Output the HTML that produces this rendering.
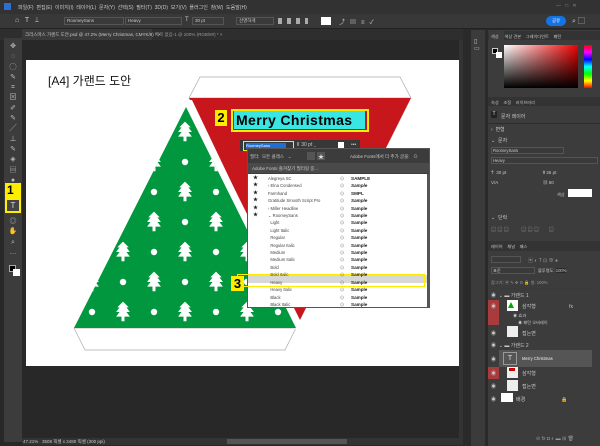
<!DOCTYPE html>
<html><head><meta charset="utf-8"><style>
*{margin:0;padding:0;box-sizing:border-box}
body{width:600px;height:446px;overflow:hidden;background:#282828;font-family:"Liberation Sans","Noto Sans CJK KR",sans-serif;position:relative;color:#ccc}
.a{position:absolute}
.t{position:absolute;font-size:5px;color:#c8c8c8;white-space:nowrap}
.f{position:absolute;background:#3a3a3a;border:1px solid #555;height:8px}
.ly{position:absolute;left:499px;width:93px;height:13px;border-top:1px solid #3a3a3a;background:#535353}
</style></head><body>
<!-- menu bar -->
<div class="a" style="left:0;top:0;width:600px;height:14px;background:#323232"></div>
<div class="a" style="left:4px;top:3px;width:7px;height:7px;background:#2d6fd0"></div>
<div class="t" style="left:18px;top:4px;font-size:5px">파일(F) &nbsp;편집(E) &nbsp;이미지(I) &nbsp;레이어(L) &nbsp;문자(Y) &nbsp;선택(S) &nbsp;필터(T) &nbsp;3D(D) &nbsp;보기(V) &nbsp;플러그인 &nbsp;창(W) &nbsp;도움말(H)</div>
<div class="t" style="left:556px;top:3px;color:#888">—&nbsp;&nbsp;&nbsp;□&nbsp;&nbsp;&nbsp;✕</div>
<!-- options bar -->
<div class="a" style="left:0;top:14px;width:600px;height:15px;background:#383838;border-bottom:1px solid #222"></div>
<div class="t" style="left:15px;top:17px;font-size:7px">⌂ &nbsp; T &nbsp; ⟘</div>
<div class="f" style="left:64px;top:17px;width:60px"></div><div class="t" style="left:67px;top:18px;font-size:4.5px">RoomeySans</div>
<div class="f" style="left:125px;top:17px;width:57px"></div><div class="t" style="left:128px;top:18px;font-size:4.5px">Heavy</div>
<div class="t" style="left:185px;top:17px;font-size:6px">T</div>
<div class="f" style="left:192px;top:17px;width:32px"></div><div class="t" style="left:195px;top:18px;font-size:4.5px">30 pt</div>
<div class="f" style="left:236px;top:17px;width:38px"></div><div class="t" style="left:239px;top:18px;font-size:4.5px">선명하게</div>
<div class="a" style="left:278px;top:18px;width:30px;height:6px;background:repeating-linear-gradient(90deg,#aaa 0 4px,transparent 4px 9px)"></div>
<div class="a" style="left:321px;top:17px;width:10px;height:8px;background:#fff"></div>
<div class="t" style="left:339px;top:17px;font-size:6px">⤴ &nbsp; ▤ &nbsp; ≡ &nbsp; ✓</div>
<div class="a" style="left:546px;top:16px;width:20px;height:10px;border-radius:5px;background:#1473e6"></div>
<div class="t" style="left:552px;top:18px;font-size:4.5px;color:#fff">공유</div>
<div class="t" style="left:572px;top:16px;font-size:7px">⌕ ▢</div>
<!-- tab bar -->
<div class="a" style="left:0;top:29px;width:463px;height:11px;background:#2e2e2e"></div>
<div class="a" style="left:22px;top:29px;width:130px;height:11px;background:#3a3a3a"></div>
<div class="t" style="left:25px;top:32px;font-size:4.5px">크리스마스 가랜드 도안.psd @ 47.2% (Merry Christmas, CMYK/8) * ×</div>
<div class="t" style="left:155px;top:32px;font-size:4.5px;color:#999">제목 없음-1 @ 200% (RGB/8#) * ×</div>
<!-- toolbar -->
<div class="a" style="left:4px;top:38px;width:18px;height:404px;background:#3c3c3c"></div>
<div class="a" style="left:6px;top:42px;width:14px;height:230px;color:#bbb;font-size:7px;line-height:10.3px;text-align:center">✥<br>◌<br>◯<br>✎<br>⌗<br>⊠<br>✐<br>✎<br>╱<br>⊥<br>✎<br>◈<br>▤<br>●<br>&nbsp;<br>&nbsp;<br>▸<br>◎<br>✋<br>⌕<br>…</div>
<div class="a" style="left:5px;top:183px;width:16px;height:30px;background:#ffed00"></div>
<div class="a" style="left:7px;top:183px;font-size:12px;font-weight:bold;color:#000">1</div>
<div class="a" style="left:7px;top:200px;width:12px;height:11px;background:#444;color:#ddd;font-size:8px;text-align:center;line-height:11px">T</div>
<div class="a" style="left:9px;top:265px;width:7px;height:7px;background:#000;border:1px solid #aaa"></div>
<div class="a" style="left:13px;top:269px;width:7px;height:7px;background:#fff"></div>
<!-- canvas scroll/status -->
<div class="a" style="left:459px;top:40px;width:4px;height:400px;background:#333"></div>
<div class="a" style="left:22px;top:438px;width:441px;height:7px;background:#333"></div>
<div class="a" style="left:227px;top:439px;width:120px;height:5px;background:#555"></div>
<div class="t" style="left:23px;top:439px;font-size:4.5px">47.21% &nbsp; 3508 픽셀 x 2480 픽셀 (300 ppi)</div>
<!-- document -->
<div class="a" style="left:26px;top:60px;width:433px;height:306px;background:#fff"></div>
<div class="a" style="left:48px;top:72px;font-size:12px;color:#111">[A4] 가랜드 도안</div>
<svg class="a" style="left:0;top:0" width="600" height="446">
<defs>
<pattern id="p" x="170" y="177" width="62" height="60" patternUnits="userSpaceOnUse">
<g fill="#fff">
<path transform="translate(15,15) scale(1.15)" d="M0,-9 L5,-4 L3,-4 L6,0 L3,0 L6,4 L1.3,4 L1.3,8 L-1.3,8 L-1.3,4 L-6,4 L-3,0 L-6,0 L-3,-4 L-5,-4Z"/>
<circle cx="46" cy="15" r="3.2"/><circle cx="15" cy="45" r="3.2"/>
<path transform="translate(46,45) scale(1.15)" d="M0,-9 L5,-4 L3,-4 L6,0 L3,0 L6,4 L1.3,4 L1.3,8 L-1.3,8 L-1.3,4 L-6,4 L-3,0 L-6,0 L-3,-4 L-5,-4Z"/>
</g></pattern></defs>
<polygon points="200,77 400,77 411,98 189,98" fill="#fff" stroke="#aaa" stroke-width="0.7"/>
<polygon points="189,98 411,98 300,320" fill="#c8161d"/>
<polygon points="74,328 296,328 285,350 85,350" fill="#fff" stroke="#aaa" stroke-width="0.7"/>
<polygon points="180,100 192,100 302,330 296,330" fill="#fff"/>
<polygon points="186,107 296,328 74,328" fill="#00973f"/>
<polygon points="186,107 296,328 74,328" fill="url(#p)"/>
</svg>
<!-- 2 label -->
<div class="a" style="left:215px;top:110px;width:12px;height:16px;background:#ffed00;color:#000;font-size:13px;font-weight:bold;text-align:center;line-height:16px">2</div>
<div class="a" style="left:231px;top:109px;width:138px;height:23px;border:2px solid #ffed00"></div>
<div class="a" style="left:234px;top:111px;width:131px;height:18px;background:#39e6e4;color:#000;font-size:14px;font-weight:bold;line-height:18px;padding-left:2px;letter-spacing:0.4px">Merry Christmas</div>
<!-- font mini bar -->
<div class="a" style="left:240px;top:140px;width:120px;height:11px;background:#383838"></div>
<div class="a" style="left:243px;top:141px;width:51px;height:10px;border:1.5px solid #ffed00"></div>
<div class="a" style="left:246px;top:143px;width:40px;height:6px;background:#1f6fd6;color:#fff;font-size:4px;line-height:6px">RoomeySans</div>
<div class="t" style="left:297px;top:142px;font-size:5px">⫪ 30 pt ⌄</div>
<div class="a" style="left:338px;top:142px;width:6px;height:7px;background:#fff"></div>
<div class="t" style="left:351px;top:142px">•••</div>
<!-- dropdown -->
<div class="a" style="left:247px;top:148px;width:183px;height:160px;background:#3c3c3c;border:1px solid #555"></div>
<div class="t" style="left:250px;top:154px;font-size:4.5px">필터: &nbsp;모든 클래스 &nbsp; ⌄</div>
<div class="a" style="left:307px;top:152px;width:8px;height:8px;background:#555"></div>
<div class="a" style="left:317px;top:152px;width:8px;height:8px;background:#555;color:#ddd;font-size:6px;text-align:center">★</div>
<div class="t" style="left:350px;top:154px;font-size:4.5px">Adobe Fonts에서 더 추가 글꼴: &nbsp; ⊙</div>
<div class="a" style="left:248px;top:163px;width:181px;height:10px;background:#4a4a4a"></div>
<div class="t" style="left:252px;top:166px;font-size:4.5px">Adobe Fonts 즐겨찾기 필터링 중...</div>
<div class="a" style="left:248px;top:174px;width:179px;height:133px;background:#fff"></div>
<div class="a" style="left:427px;top:174px;width:2px;height:133px;background:#555"></div>
<div class="a" style="left:248px;top:275px;width:179px;height:8px;background:#d8d8d8"></div>
<div class="a" style="left:237px;top:274px;width:188px;height:13px;border:1.5px solid #ffed00"></div>
<div class="a" style="left:231px;top:276px;width:13px;height:15px;background:#ffed00;color:#000;font-size:13px;font-weight:bold;text-align:center;line-height:15px">3</div>
<div class="a" style="left:253px;top:175px;font-size:5px;line-height:7.4px;color:#222">★<br>★<br>★<br>★<br>★<br>★</div>
<div class="a" style="left:268px;top:175px;font-size:4.2px;line-height:7.4px;color:#444">Alegreya SC<br>› Elna Condensed<br>Farmhand<br>Gratitude Smooth Script Pro<br>› Miller Headline<br>⌄ RoomeySans<br>&nbsp;&nbsp;Light<br>&nbsp;&nbsp;Light Italic<br>&nbsp;&nbsp;Regular<br>&nbsp;&nbsp;Regular Italic<br>&nbsp;&nbsp;Medium<br>&nbsp;&nbsp;Medium Italic<br>&nbsp;&nbsp;Bold<br>&nbsp;&nbsp;Bold Italic<br>&nbsp;&nbsp;Heavy<br>&nbsp;&nbsp;Heavy Italic<br>&nbsp;&nbsp;Black<br>&nbsp;&nbsp;Black Italic</div>
<div class="a" style="left:340px;top:175px;font-size:4.2px;line-height:7.4px;color:#444">⊙<br>⊙<br>⊙<br>⊙<br>⊙<br>⊙<br>⊙<br>⊙<br>⊙<br>⊙<br>⊙<br>⊙<br>⊙<br>⊙<br>⊙<br>⊙<br>⊙<br>⊙</div>
<div class="a" style="left:351px;top:175px;font-size:4.6px;line-height:7.4px;color:#222;font-weight:bold">SAMPLE<br><i>Sample</i><br>SMPL<br><i>Sample</i><br>Sample<br>Sample<br>Sample<br>Sample<br>Sample<br>Sample<br>Sample<br>Sample<br>Sample<br>Sample<br>Sample<br>Sample<br>Sample<br>Sample</div>
<!-- right strip -->
<div class="a" style="left:463px;top:29px;width:137px;height:417px;background:#2a2a2a"></div>
<div class="a" style="left:471px;top:30px;width:14px;height:416px;background:#3b3b3b"></div>
<div class="t" style="left:474px;top:38px;font-size:6px">▯<br>▭</div>
<div class="a" style="left:488px;top:30px;width:112px;height:416px;background:#3c3c3c"></div>
<!-- color panel -->
<div class="a" style="left:488px;top:31px;width:112px;height:9px;background:#333"></div>
<div class="a" style="left:489px;top:31px;width:15px;height:9px;background:#3c3c3c"></div>
<div class="t" style="left:491px;top:34px;font-size:4.2px">색상 &nbsp;&nbsp;&nbsp; 색상 견본 &nbsp;&nbsp; 그레이디언트 &nbsp;&nbsp; 패턴</div>
<div class="a" style="left:492px;top:48px;width:6px;height:6px;background:#000;border:1px solid #ccc"></div>
<div class="a" style="left:496px;top:52px;width:6px;height:6px;background:#fff"></div>
<div class="a" style="left:504px;top:45px;width:74px;height:43px;background:linear-gradient(to bottom,transparent,#000),linear-gradient(to right,#fff,#e00)"></div>
<div class="a" style="left:584px;top:45px;width:8px;height:43px;background:linear-gradient(#f00,#f0f,#00f,#0ff,#0f0,#ff0,#f00)"></div>
<!-- properties -->
<div class="a" style="left:488px;top:97px;width:112px;height:9px;background:#333"></div>
<div class="t" style="left:491px;top:100px;font-size:4.2px">속성 &nbsp;&nbsp; 조정 &nbsp;&nbsp; 라이브러리</div>
<div class="a" style="left:491px;top:111px;width:6px;height:7px;background:#222;color:#ddd;font-size:5px;text-align:center">T</div>
<div class="t" style="left:501px;top:113px">문자 레이어</div>
<div class="a" style="left:488px;top:123px;width:112px;height:1px;background:#2c2c2c"></div>
<div class="t" style="left:491px;top:126px">› &nbsp;변형</div>
<div class="t" style="left:491px;top:137px">⌄ &nbsp;문자</div>
<div class="f" style="left:491px;top:147px;width:73px;height:7px"></div><div class="t" style="left:493px;top:148px;font-size:4.2px">RoomeySans</div>
<div class="f" style="left:491px;top:157px;width:107px;height:7px"></div><div class="t" style="left:493px;top:158px;font-size:4.2px">Heavy</div>
<div class="t" style="left:491px;top:170px;font-size:4.5px">T̂ &nbsp;30 pt &nbsp;&nbsp;&nbsp;&nbsp;&nbsp;&nbsp;&nbsp;&nbsp;&nbsp;&nbsp;&nbsp;&nbsp;&nbsp;&nbsp;&nbsp;&nbsp;&nbsp;&nbsp;&nbsp;&nbsp;&nbsp;&nbsp;&nbsp;&nbsp;&nbsp;&nbsp;&nbsp; ⫪ 36 pt</div>
<div class="t" style="left:491px;top:180px;font-size:4.5px">V/A &nbsp;&nbsp;&nbsp;&nbsp;&nbsp;&nbsp;&nbsp;&nbsp;&nbsp;&nbsp;&nbsp;&nbsp;&nbsp;&nbsp;&nbsp;&nbsp;&nbsp;&nbsp;&nbsp;&nbsp;&nbsp;&nbsp;&nbsp;&nbsp;&nbsp;&nbsp;&nbsp;&nbsp;&nbsp;&nbsp;&nbsp;&nbsp;&nbsp;&nbsp; ▦ 50</div>
<div class="t" style="left:557px;top:192px;font-size:4.2px">색상</div>
<div class="a" style="left:568px;top:189px;width:24px;height:8px;background:#fff"></div>
<div class="t" style="left:491px;top:214px">⌄ &nbsp;단락</div>
<div class="t" style="left:491px;top:226px;color:#999">▤ ▤ ▤ &nbsp;&nbsp;&nbsp;&nbsp;&nbsp;&nbsp;&nbsp; ▤ ▤ ▤ &nbsp;&nbsp;&nbsp;&nbsp;&nbsp; ▤</div>
<!-- layers -->
<div class="a" style="left:488px;top:241px;width:112px;height:10px;background:#333"></div>
<div class="t" style="left:491px;top:244px;font-size:4.2px">레이어 &nbsp;&nbsp; 채널 &nbsp;&nbsp; 패스</div>
<div class="f" style="left:491px;top:256px;width:30px;height:7px"></div>
<div class="t" style="left:528px;top:257px;color:#999">▣ ◐ T ⊡ ⊕ ●</div>
<div class="f" style="left:491px;top:267px;width:44px;height:7px"></div><div class="t" style="left:493px;top:268px;font-size:4.2px">표준</div>
<div class="t" style="left:538px;top:268px;font-size:4.2px">불투명도: <span style="background:#2a2a2a">100%</span></div>
<div class="t" style="left:491px;top:280px;font-size:4.2px;color:#999">잠그기: ▣ ✎ ✥ ⊡ 🔒 칠: 100%</div>
<div class="ly" style="top:288px;background:#3c3c3c"></div>
<div class="t" style="left:491px;top:292px">◉ &nbsp;⌄ ▬ 가랜드 1</div>
<div class="a" style="left:488px;top:300px;width:11px;height:25px;background:#a83c3c"></div>
<div class="t" style="left:491px;top:303px">◉</div>
<div class="a" style="left:507px;top:300px;width:11px;height:11px;background:#fff"></div>
<div class="a" style="left:508px;top:302px;width:0;height:0;border-left:3px solid transparent;border-right:3px solid transparent;border-bottom:6px solid #0a0"></div>
<div class="t" style="left:522px;top:303px">삼각형 &nbsp;&nbsp;&nbsp;&nbsp;&nbsp;&nbsp;&nbsp;&nbsp;&nbsp;&nbsp;&nbsp;&nbsp;&nbsp;&nbsp;&nbsp;&nbsp;&nbsp;&nbsp;&nbsp;&nbsp;&nbsp;&nbsp; fx</div>
<div class="t" style="left:513px;top:313px;font-size:4.2px">◉ 효과</div>
<div class="t" style="left:518px;top:320px;font-size:4.2px">◉ 패턴 오버레이</div>
<div class="t" style="left:491px;top:330px">◉</div>
<div class="a" style="left:507px;top:326px;width:11px;height:11px;background:#eee"></div>
<div class="t" style="left:522px;top:330px">접는면</div>
<div class="t" style="left:491px;top:342px">◉ &nbsp;⌄ ▬ 가랜드 2</div>
<div class="a" style="left:499px;top:350px;width:93px;height:17px;background:#555"></div>
<div class="t" style="left:491px;top:356px">◉</div>
<div class="a" style="left:503px;top:352px;width:14px;height:13px;border:1px solid #999;color:#ddd;font-size:7px;text-align:center;line-height:11px">T</div>
<div class="t" style="left:522px;top:356px;font-size:4.2px;color:#eee">Merry Christmas</div>
<div class="a" style="left:488px;top:367px;width:11px;height:12px;background:#a83c3c"></div>
<div class="t" style="left:491px;top:370px">◉</div>
<div class="a" style="left:507px;top:367px;width:11px;height:11px;background:#eee"></div>
<div class="a" style="left:509px;top:368px;width:6px;height:3px;background:#c00"></div>
<div class="t" style="left:522px;top:370px">삼각형</div>
<div class="t" style="left:491px;top:383px">◉</div>
<div class="a" style="left:507px;top:380px;width:11px;height:11px;background:#eee"></div>
<div class="t" style="left:522px;top:383px">접는면</div>
<div class="t" style="left:491px;top:396px">◉</div>
<div class="a" style="left:501px;top:393px;width:12px;height:9px;background:#fff"></div>
<div class="t" style="left:516px;top:396px">배경 &nbsp;&nbsp;&nbsp;&nbsp;&nbsp;&nbsp;&nbsp;&nbsp;&nbsp;&nbsp;&nbsp;&nbsp;&nbsp;&nbsp;&nbsp;&nbsp;&nbsp;&nbsp;&nbsp;&nbsp;&nbsp;&nbsp;&nbsp;&nbsp; 🔒</div>
<div class="t" style="left:536px;top:436px;color:#999">⊝ fx ◘ ◐ ▬ ⊞ 🗑</div>
</body></html>
